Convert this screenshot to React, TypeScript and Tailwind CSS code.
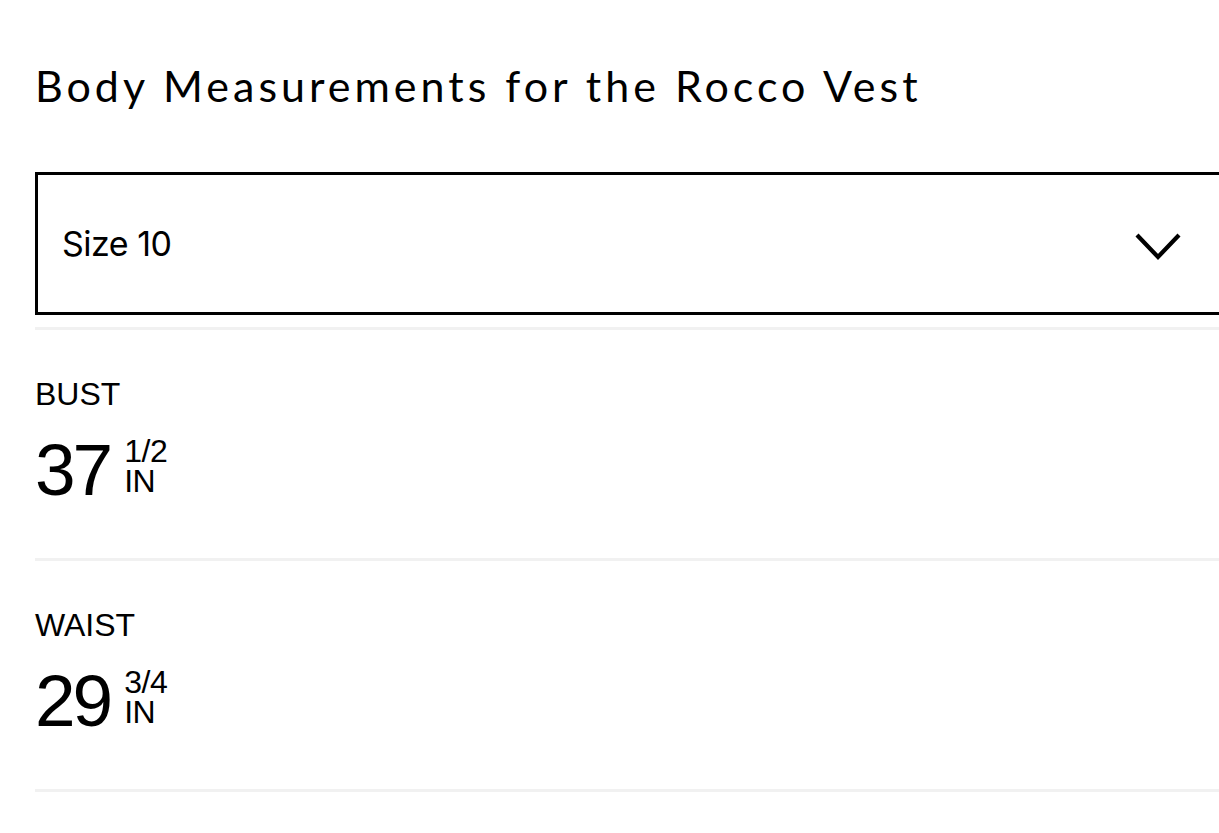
import React from "react";

function Measure({ label, whole, frac }: { label: string; whole: string; frac: string }) {
  return (
    <div className="h-[231px] border-b-[3px] border-[#f1f1f1] pt-[46px]">
      <div className="text-[32px] leading-[36px] text-black" style={{ fontFamily: '"Liberation Sans", Arial, sans-serif' }}>
        {label}
      </div>
      <div className="mt-[18px] flex items-start" style={{ fontFamily: '"Liberation Sans", Arial, sans-serif' }}>
        <span className="text-[73px] leading-[80px] tracking-[-3px] text-black">{whole}</span>
        <span className="ml-[14px] mt-[6px] flex flex-col text-[32px] leading-[30px] tracking-[-0.5px] text-black">
          <span>{frac}</span>
          <span>IN</span>
        </span>
      </div>
    </div>
  );
}

export default function App() {
  return (
    <div className="min-h-screen w-full overflow-hidden bg-white text-black">
      <div className="pl-[35px] -mr-[6px]">
        <h1
          className="pt-[58px] text-[43px] leading-[56px] text-black"
          style={{ fontFamily: 'Lato, "Open Sans", sans-serif', letterSpacing: "4px" }}
        >
          Body Measurements for the Rocco Vest
        </h1>
        <div className="mt-[58px] flex h-[143px] items-center justify-between border-[3px] border-black pl-[24px] pr-[37px]">
          <span className="text-[34px] text-black" style={{ fontFamily: 'Inter, "Noto Sans", sans-serif', letterSpacing: "-0.5px" }}>
            Size 10
          </span>
          <svg width="48" height="32" viewBox="0 0 48 32" fill="none" className="mr-[3px] mt-[6px]">
            <path d="M3 4 L24 26 L45 4" stroke="black" strokeWidth="4.2" />
          </svg>
        </div>
        <div className="mt-[12px] border-b-[3px] border-[#f1f1f1]" />
        <Measure label="BUST" whole="37" frac="1/2" />
        <Measure label="WAIST" whole="29" frac="3/4" />
      </div>
    </div>
  );
}
